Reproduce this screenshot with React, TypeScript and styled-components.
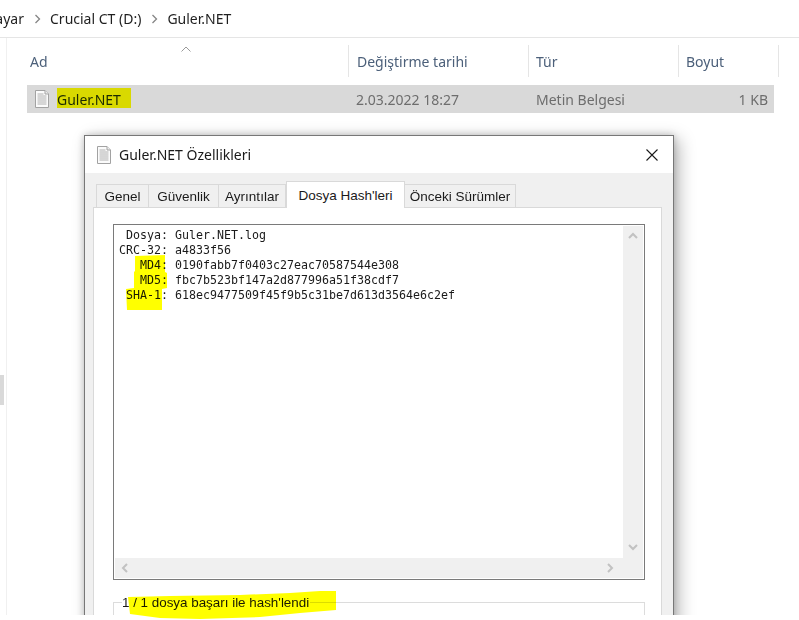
import React from "react";
import styled, { createGlobalStyle } from "styled-components";

const GlobalStyle = createGlobalStyle`
  html, body {
    margin: 0;
    padding: 0;
    background: #fff;
  }
  body {
    font-family: "Noto Sans", "Open Sans", Arial, sans-serif;
  }
`;

const Screen = styled.div`
  position: relative;
  width: 799px;
  height: 620px;
  overflow: hidden;
  background: #fff;
`;

const Page = styled.div`
  position: relative;
  height: 615px;
  overflow: hidden;
`;

const Breadcrumb = styled.div`
  display: flex;
  align-items: center;
  height: 37px;
  border-bottom: 1px solid #e5e5e5;
  font-size: 14px;
  color: #1f1f1f;
`;

const ClippedCrumb = styled.div`
  display: flex;
  justify-content: flex-end;
  width: 24px;
  overflow: hidden;
  white-space: nowrap;
`;

const Crumb = styled.span`
  white-space: nowrap;
`;

const CrumbArrow = styled.svg`
  width: 7px;
  height: 10px;
  margin: 0 9px 0 10px;
  fill: none;
  stroke: #858585;
  stroke-width: 1.3;
`;

const Main = styled.div`
  display: flex;
  height: 577px;
`;

const Sidebar = styled.div`
  width: 6px;
  border-right: 1px solid #f0f0f0;
  flex: none;
`;

const SideThumb = styled.div`
  width: 4px;
  height: 30px;
  margin-top: 337px;
  background: #d9d9d9;
`;

const Content = styled.div`
  flex: 1;
  padding-left: 15px;
`;

const SortArrow = styled.svg`
  position: absolute;
  left: 181px;
  top: 46px;
  width: 10px;
  height: 6px;
  fill: none;
  stroke: #9a9a9a;
  stroke-width: 1;
`;

const HeaderRow = styled.div`
  display: grid;
  grid-template-columns: 327px 180px 150px 100px;
  height: 32px;
  margin-top: 7px;
`;

const HeaderCell = styled.div<{ $inset: number }>`
  display: flex;
  align-items: center;
  padding-left: ${(p) => p.$inset}px;
  border-right: 1px solid #e5e5e5;
  font-size: 14px;
  color: #4c607a;
`;

const FileRow = styled.div`
  display: grid;
  grid-template-columns: 329px 180px 1fr auto;
  align-items: center;
  width: 747px;
  height: 28px;
  margin: 8px 0 0 5px;
  padding-right: 6px;
  box-sizing: border-box;
  background: #d9d9d9;
  font-size: 14px;
  color: #6d6d6d;
`;

const FileName = styled.div`
  display: flex;
  align-items: center;
  gap: 8px;
  padding-left: 8px;
  color: #1c2a00;
`;

const DocIcon = styled.svg`
  display: block;
  flex: none;
  width: 14px;
  height: 18px;
`;

const Dialog = styled.div`
  position: absolute;
  left: 84px;
  top: 135px;
  width: 590px;
  height: 500px;
  box-sizing: border-box;
  border: 1px solid #777;
  background: #f0f0f0;
  box-shadow: 5px 4px 16px rgba(0, 0, 0, 0.28), 0 0 7px rgba(0, 0, 0, 0.2);
`;

const TitleBar = styled.div`
  display: flex;
  align-items: center;
  height: 37px;
  padding: 0 15px 0 12px;
  background: #fff;
  font-size: 14px;
  color: #1a1a1a;
  gap: 8px;
`;

const TitleText = styled.span`
  flex: 1;
`;

const CloseIcon = styled.svg`
  width: 12px;
  height: 12px;
  stroke: #1a1a1a;
  stroke-width: 1.1;
  fill: none;
`;

const DialogBody = styled.div`
  padding: 8px 11px 0 8px;
`;

const TabList = styled.div`
  display: flex;
  align-items: flex-end;
  height: 27px;
  padding-left: 3px;
  margin-bottom: -1px;
`;

const Tab = styled.div<{ $width: number; $active?: boolean }>`
  position: relative;
  z-index: ${(p) => (p.$active ? 1 : 0)};
  display: flex;
  align-items: center;
  justify-content: center;
  box-sizing: border-box;
  width: ${(p) => p.$width}px;
  height: ${(p) => (p.$active ? 27 : 24)}px;
  border: 1px solid #d9d9d9;
  border-left: ${(p) => (p.$active ? "1px solid #d9d9d9" : "none")};
  border-bottom: ${(p) => (p.$active ? "none" : "1px solid #d9d9d9")};
  background: ${(p) => (p.$active ? "#fff" : "#f0f0f0")};
  font-family: "Liberation Sans", Arial, sans-serif;
  font-size: 13.5px;
  color: #1a1a1a;

  &:first-child {
    border-left: 1px solid #d9d9d9;
  }
`;

const TabPanel = styled.div`
  height: 420px;
  box-sizing: border-box;
  padding: 16px 16px 0 19px;
  border: 1px solid #d9d9d9;
  background: #fff;
`;

const HashBox = styled.div`
  display: grid;
  grid-template-columns: 1fr 20px;
  grid-template-rows: 332px 20px;
  box-sizing: border-box;
  width: 532px;
  height: 356px;
  padding: 1px;
  border: 1px solid #7a7a7a;
`;

const HashText = styled.div`
  padding: 2px 0 0 4px;
  font-family: "DejaVu Sans Mono", "Liberation Mono", monospace;
  font-size: 11.63px;
  line-height: 15px;
  color: #1a1a1a;
`;

const HashRow = styled.div`
  display: grid;
  grid-template-columns: 49px auto;
  column-gap: 7px;
`;

const HashLabel = styled.span`
  text-align: right;
`;

const VScroll = styled.div`
  display: flex;
  flex-direction: column;
  justify-content: space-between;
  align-items: center;
  padding: 5px 0 6px;
  background: #f0f0f0;
`;

const HScroll = styled.div`
  grid-column: 1 / span 2;
  display: flex;
  justify-content: space-between;
  align-items: center;
  padding: 0 28px 0 5px;
  background: #f0f0f0;
`;

const ScrollArrow = styled.svg<{ $turn: number }>`
  display: block;
  width: 10px;
  height: 10px;
  fill: none;
  stroke: #c2c2c2;
  stroke-width: 2;
  transform: rotate(${(p) => p.$turn}deg);
`;

const ResultGroup = styled.fieldset`
  box-sizing: border-box;
  width: 532px;
  height: 60px;
  margin: 12px 0 0;
  padding: 0 8px;
  border: 1px solid #dcdcdc;
`;

const ResultLegend = styled.legend`
  padding: 2px 1px 0 0;
  font-family: "Liberation Sans", Arial, sans-serif;
  font-size: 13.4px;
  line-height: 18px;
  color: #1a1a1a;
`;

const MarkerLayer = styled.svg`
  position: absolute;
  left: 0;
  top: 0;
  width: 799px;
  height: 620px;
  mix-blend-mode: multiply;
  pointer-events: none;
`;

const Doc: React.FC = () => (
  <DocIcon viewBox="0 0 14 18">
    <path d="M0.5 0.5H10L13.5 4V17.5H0.5Z" fill="#fbfbfb" stroke="#a2a2a2" />
    <path d="M10 0.5V4H13.5" fill="#eee" stroke="#a2a2a2" />
    <path
      d="M2.5 4H8.5M2.5 6H11.5M2.5 8H11.5M2.5 10H11.5M2.5 12H11.5M2.5 14H11.5"
      stroke="#b0b0b0"
    />
  </DocIcon>
);

const Arrow: React.FC<{ turn: number }> = ({ turn }) => (
  <ScrollArrow viewBox="0 0 10 10" $turn={turn}>
    <path d="M1 7L5 3L9 7" />
  </ScrollArrow>
);

const crumbArrow = (
  <CrumbArrow viewBox="0 0 7 10">
    <path d="M1.5 1L5.5 5L1.5 9" />
  </CrumbArrow>
);

const columns = [
  { label: "Ad", inset: 8 },
  { label: "Değiştirme tarihi", inset: 8 },
  { label: "Tür", inset: 7 },
  { label: "Boyut", inset: 7 },
];

const tabs = [
  { label: "Genel", width: 53 },
  { label: "Güvenlik", width: 70 },
  { label: "Ayrıntılar", width: 67 },
  { label: "Dosya Hash'leri", width: 119, active: true },
  { label: "Önceki Sürümler", width: 111 },
];

const hashes = [
  ["Dosya:", "Guler.NET.log"],
  ["CRC-32:", "a4833f56"],
  ["MD4:", "0190fabb7f0403c27eac70587544e308"],
  ["MD5:", "fbc7b523bf147a2d877996a51f38cdf7"],
  ["SHA-1:", "618ec9477509f45f9b5c31be7d613d3564e6c2ef"],
];

const App: React.FC = () => {
  return (
    <Screen>
      <GlobalStyle />
      <Page>
        <Breadcrumb>
          <ClippedCrumb>Bilgisayar</ClippedCrumb>
          {crumbArrow}
          <Crumb>Crucial CT (D:)</Crumb>
          {crumbArrow}
          <Crumb>Guler.NET</Crumb>
        </Breadcrumb>
        <Main>
          <Sidebar>
            <SideThumb />
          </Sidebar>
          <Content>
            <SortArrow viewBox="0 0 10 6">
              <path d="M0.5 5.5L5 1L9.5 5.5" />
            </SortArrow>
            <HeaderRow>
              {columns.map((col) => (
                <HeaderCell key={col.label} $inset={col.inset}>
                  {col.label}
                </HeaderCell>
              ))}
            </HeaderRow>
            <FileRow>
              <FileName>
                <Doc />
                Guler.NET
              </FileName>
              <span>2.03.2022 18:27</span>
              <span>Metin Belgesi</span>
              <span>1 KB</span>
            </FileRow>
          </Content>
        </Main>
        <Dialog>
          <TitleBar>
            <Doc />
            <TitleText>Guler.NET Özellikleri</TitleText>
            <CloseIcon viewBox="0 0 12 12">
              <path d="M0.5 0.5L11.5 11.5M11.5 0.5L0.5 11.5" />
            </CloseIcon>
          </TitleBar>
          <DialogBody>
            <TabList>
              {tabs.map((tab) => (
                <Tab key={tab.label} $width={tab.width} $active={tab.active}>
                  {tab.label}
                </Tab>
              ))}
            </TabList>
            <TabPanel>
              <HashBox>
                <HashText>
                  {hashes.map(([label, value]) => (
                    <HashRow key={label}>
                      <HashLabel>{label}</HashLabel>
                      <span>{value}</span>
                    </HashRow>
                  ))}
                </HashText>
                <VScroll>
                  <Arrow turn={0} />
                  <Arrow turn={180} />
                </VScroll>
                <HScroll>
                  <Arrow turn={270} />
                  <Arrow turn={90} />
                </HScroll>
              </HashBox>
              <ResultGroup>
                <ResultLegend>1 / 1 dosya başarı ile hash'lendi</ResultLegend>
              </ResultGroup>
            </TabPanel>
          </DialogBody>
        </Dialog>
      </Page>
      <MarkerLayer viewBox="0 0 799 620">
        <path d="M57 88H131V108H57Z" fill="#ffff00" />
        <path
          d="M135 256L165 255V272L167 273V288L162 289V310L127 310L126 289L134 288L134 272L135 271Z"
          fill="#ffff00"
        />
        <path
          d="M128 597L170 596L240 595L290 593L320 591L336 591L336 610L300 613L260 617L200 619L160 618L130 614Z"
          fill="#ffff00"
        />
      </MarkerLayer>
    </Screen>
  );
};

export default App;
